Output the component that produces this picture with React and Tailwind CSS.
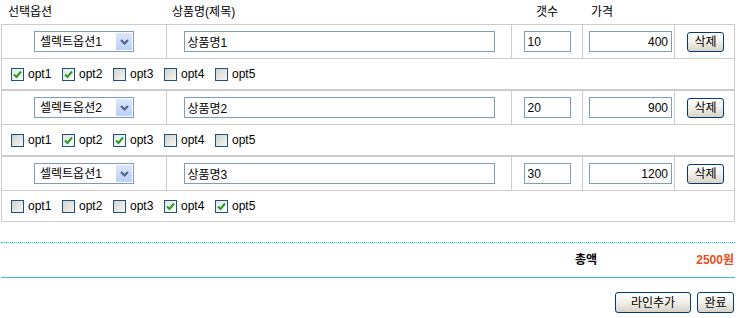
import { useState } from 'react';

const items = [
  { opt: '셀렉트옵션1', name: '상품명1', qty: '10', price: '400', checks: [true, true, false, false, false] },
  { opt: '셀렉트옵션2', name: '상품명2', qty: '20', price: '900', checks: [false, true, true, false, false] },
  { opt: '셀렉트옵션1', name: '상품명3', qty: '30', price: '1200', checks: [false, false, false, true, true] },
];

const inputStyles = "h-[21px] border border-[#7f9db9] px-[3px] text-[12px] text-black outline-none bg-white";

function Check({ checked, label, onToggle }) {
  return (
    <label className="w-[51px] flex items-center gap-[4px] cursor-pointer" onClick={onToggle}>
      <span
        className={
          "w-[13px] h-[13px] border border-[#1c5180] flex items-center justify-center " +
          (checked ? "bg-gradient-to-br from-[#e4e4df] to-white" : "bg-gradient-to-br from-[#d2d2cc] to-[#f6f6f3]")
        }
      >
        {checked && (
          <svg width="9" height="9" viewBox="0 0 9 9">
            <path d="M1 4.5 L3.5 7 L8 1.5" fill="none" stroke="#21a121" strokeWidth="2" />
          </svg>
        )}
      </span>
      <span className="text-[12px] text-black">{label}</span>
    </label>
  );
}

function XpButton({ children, className = '' }) {
  return (
    <button
      type="button"
      className={
        "h-[20px] border border-[#003c74] rounded-[3px] bg-gradient-to-b from-white via-[#f1efe8] to-[#d8d3c6] text-[12px] text-black leading-none " +
        className
      }
    >
      {children}
    </button>
  );
}

function ItemBlock({ item }) {
  const [checks, setChecks] = useState(item.checks);
  const toggle = (i) => setChecks(checks.map((c, j) => (j === i ? !c : c)));

  return (
    <div className="w-[734px] border border-[#cccccc]">
      <div className="flex h-[34px] border-b border-[#cccccc]">
        <div className="w-[164px] flex items-center justify-center">
          <div className="w-[100px] h-[21px] border border-[#7f9db9] bg-white flex items-center justify-between pl-[5px] pr-px">
            <span className="text-[12px] text-black">{item.opt}</span>
            <span className="w-[16px] h-[17px] bg-gradient-to-b from-[#dce6fd] to-[#bccff9] flex items-center justify-center">
              <svg width="9" height="6" viewBox="0 0 9 6">
                <path d="M1 1 L4.5 4.5 L8 1" fill="none" stroke="#4d6185" strokeWidth="2" />
              </svg>
            </span>
          </div>
        </div>
        <div className="w-[345px] border-l border-[#cccccc] flex items-center justify-center">
          <input className={inputStyles + " w-[311px]"} defaultValue={item.name} />
        </div>
        <div className="w-[71px] border-l border-[#cccccc] flex items-center justify-center">
          <input className={inputStyles + " w-[47px]"} defaultValue={item.qty} />
        </div>
        <div className="w-[92px] border-l border-[#cccccc] flex items-center pl-[6px]">
          <input className={inputStyles + " w-[83px] text-right"} defaultValue={item.price} />
        </div>
        <div className="w-[60px] border-l border-[#cccccc] flex items-center pl-[12px]">
          <XpButton className="w-[37px] h-[19px]">삭제</XpButton>
        </div>
      </div>
      <div className="flex items-center h-[30px] pl-[9px]">
        {checks.map((c, i) => (
          <Check key={i} checked={c} label={'opt' + (i + 1)} onToggle={() => toggle(i)} />
        ))}
      </div>
    </div>
  );
}

export default function App() {
  return (
    <div
      className="w-[750px] h-[318px] bg-white text-black overflow-hidden"
      style={{ fontFamily: '"Liberation Sans", "Noto Sans CJK KR", sans-serif' }}
    >
      <div className="ml-px w-[734px]">
        <div className="flex h-[24px] items-center text-[12px]">
          <div className="w-[165px] pl-[7px]">선택옵션</div>
          <div className="w-[345px] pl-[6px]">상품명(제목)</div>
          <div className="w-[71px] pl-[25px]">갯수</div>
          <div className="w-[92px] pl-[9px]">가격</div>
        </div>

        {items.map((item, i) => (
          <ItemBlock key={i} item={item} />
        ))}

        <div className="mt-[20px] border-t border-dotted border-[#00cccc]" />
        <div className="flex items-center h-[34px] text-[12px] font-bold">
          <span className="ml-[574px]">총액</span>
          <span className="ml-auto pr-px text-[#e8501e]">2500원</span>
        </div>
        <div className="border-t border-[#33c6c6]" />

        <div className="mt-[14px] flex justify-end gap-[6px] pr-px">
          <XpButton className="w-[76px] h-[21px]">라인추가</XpButton>
          <XpButton className="w-[37px] h-[21px]">완료</XpButton>
        </div>
      </div>
    </div>
  );
}
